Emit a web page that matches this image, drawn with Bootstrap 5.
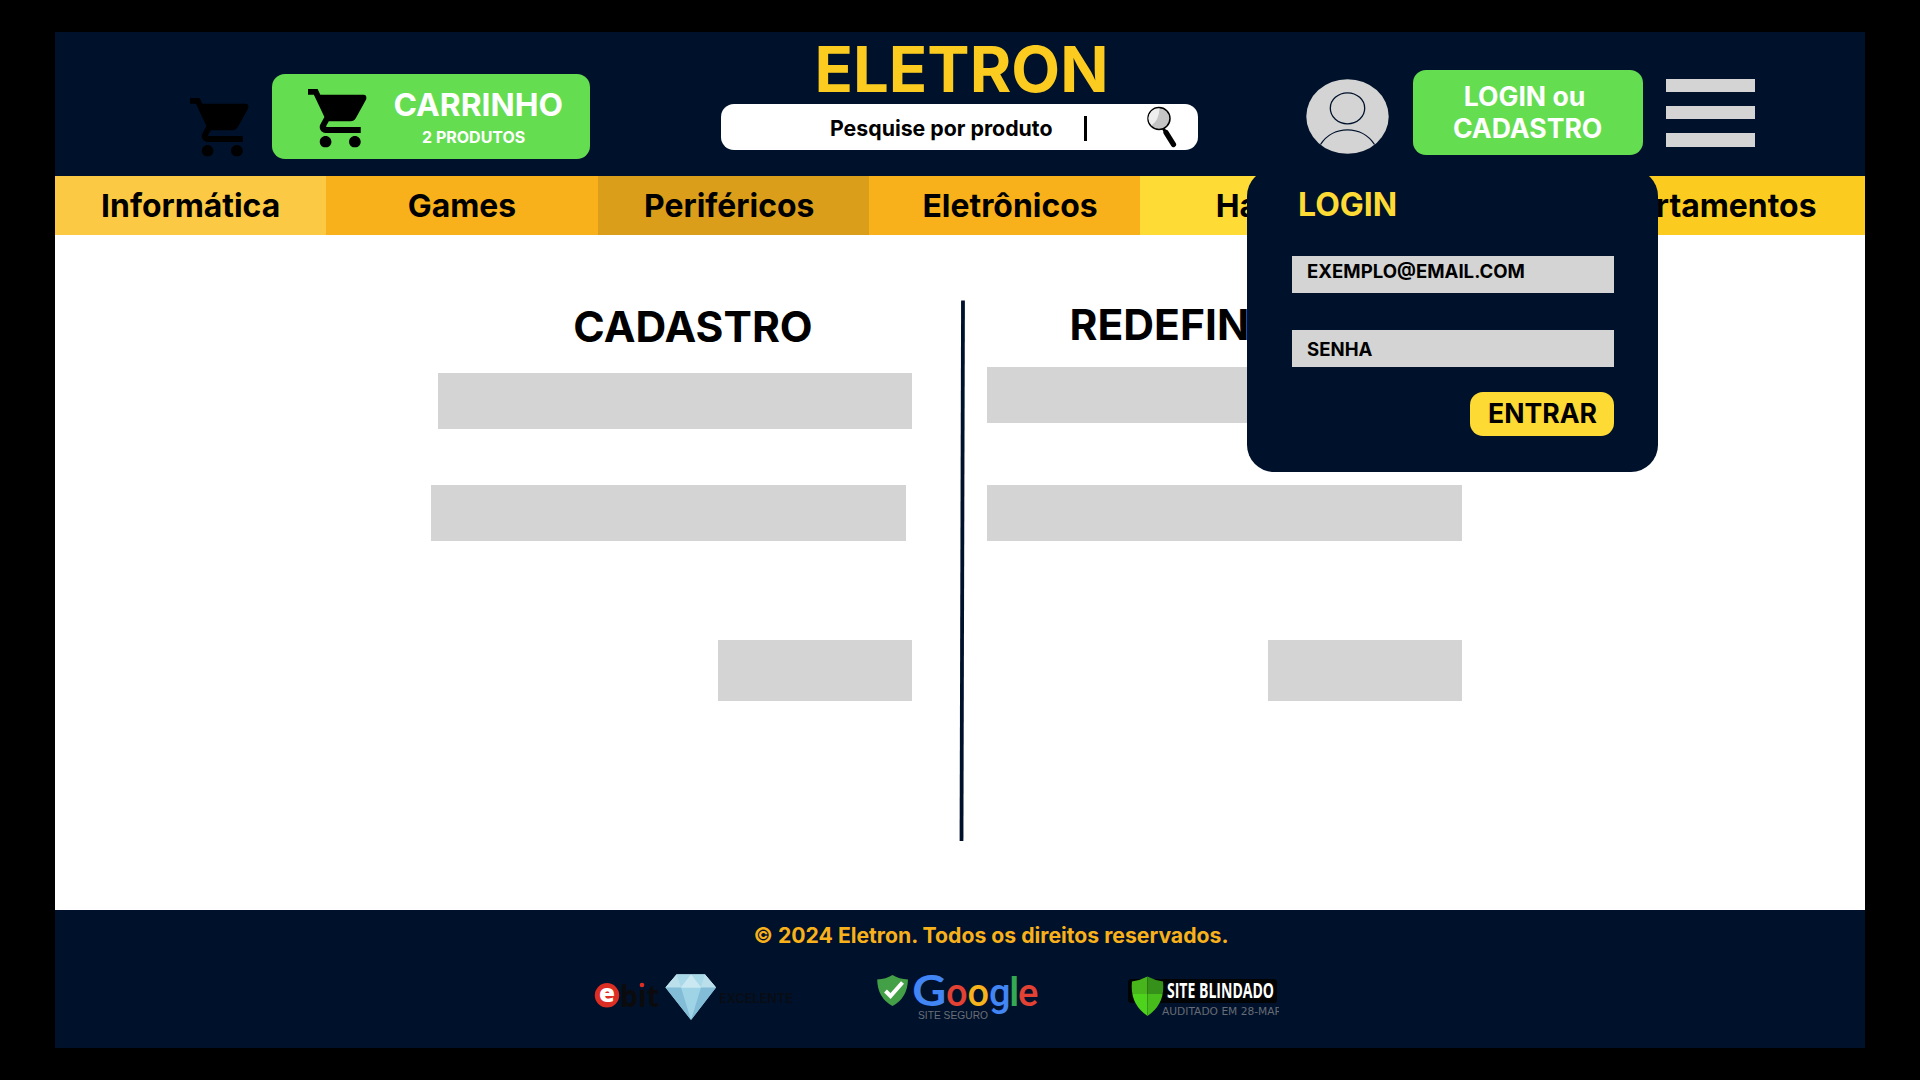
<!DOCTYPE html>
<html lang="pt-BR">
<head>
<meta charset="utf-8">
<meta name="viewport" content="width=device-width, initial-scale=1">
<title>Eletron</title>
<link href="https://cdn.jsdelivr.net/npm/bootstrap@5.3.0/dist/css/bootstrap.min.css" rel="stylesheet">
<style>
  :root { --navy:#00122b; --green:#64dd51; --yellow:#feda35; --grey:#d4d4d4; }
  body { background:#000; font-family:Inter,"Liberation Sans",sans-serif; font-weight:700; color:#000; line-height:1; overflow:hidden; }
  .page { width:1809.5px; height:1016px; margin:32px 0 0 55px; white-space:nowrap; }
  .topo { height:144px; background:var(--navy); padding-left:135px; }
  .ico-cart { width:58.6px; height:58.6px; display:block; }
  .cart-solo { margin-top:66px; }
  .btn-eletron { background:var(--green); color:#fff; border-radius:13px; font-weight:700; border:0; line-height:1; }
  .btn-cart { width:318px; height:85px; margin:42px 0 0 23.4px; padding:15px 27px 0 36px; }
  .cart-label { font-size:31.8px; margin-bottom:8.5px; }
  .cart-count { font-size:16px; padding-right:9px; }
  .brand-col { width:477px; margin:6.3px 0 0 131px; }
  .brand-name { font-size:63.4px; height:66px; color:#fccb20; padding-left:4px; }
  .busca { height:45.5px; background:#fff; border-radius:13px; padding-left:109px; }
  .busca-txt { font-size:21.3px; width:254px; padding-top:4px; }
  .caret { width:2.6px; height:25px; background:#000; margin-top:3px; }
  .lupa { width:32px; height:42px; margin:0 0 0 60.7px; }
  .avatar { width:83px; height:75px; margin:47px 0 0 108.5px; display:block; }
  .btn-login { width:230px; height:85px; margin:38px 0 0 23.5px; padding:0 7px 1px 0; font-size:26.6px; line-height:32px; }
  .menu-icon { width:89px; margin:47px 0 0 23px; display:flex; flex-direction:column; gap:13.7px; }
  .menu-icon span { height:13.4px; background:var(--grey); }
  .depts { height:58.5px; font-size:31.9px; }
  .depts a { flex:0 0 271.3px; color:#000; text-decoration:none; padding-top:2px; }
  .c1 { background:#fcc945; } .c2 { background:#f8b11b; } .c3 { background:#da9e1a; } .c5 { background:#fedb35; }
  .depts a.c3 { padding-right:8px; }
  .depts a.c4 { padding-left:11px; }
  .depts a.c5 { padding-left:31px; }
  .depts a.c6 { background:#fccb20; flex:1 1 0; padding-right:48px; }
  .conteudo { height:675.5px; background:#fff; padding:65.5px 0 0 376px; }
  .col-form { width:481px; padding-top:6px; }
  .col-right { margin-left:22px; width:475px; padding-top:3.5px; }
  .form-title { font-size:42.6px; line-height:1; font-weight:700; margin:0; }
  .title-left { height:67px; padding-left:43px; }
  .title-right { height:63.5px; padding-left:82.5px; }
  .campo { width:474.5px; height:55.7px; background:var(--grey); }
  .gap-left { margin-top:56.3px; } .gap-right { margin-top:62.3px; } .gap-acao { margin-top:99.3px; }
  .acao { width:194px; height:61px; background:var(--grey); }
  .divisor { width:6px; height:542px; margin-left:47px; display:block; }
  .rodape { height:138px; background:var(--navy); color:#f8b11b; }
  .copy { font-size:21.2px; padding:15px 0 0 698.5px; height:61px; }
  .selos { padding-left:538px; }
  .selos svg { display:block; }
  .login-box { position:absolute; left:1247px; top:169px; width:411px; height:302.7px; background:var(--navy); border-radius:27px; padding:19.5px 44px 0 45px; z-index:5; white-space:nowrap; }
  .login-title { font-size:32px; color:var(--yellow); line-height:1; font-weight:700; margin:0; padding-left:6px; height:67px; }
  .login-field { height:37.5px; width:322px; background:var(--grey); padding:6.4px 0 0 15px; font-size:18.6px; }
  .field-senha { margin-top:36.5px; padding-top:10.4px; }
  .entrar-row { margin-top:25px; }
  .btn-entrar { width:144px; height:44px; background:var(--yellow); border:0; border-radius:13px; font-weight:700; font-size:26.6px; line-height:1; padding:0 0 2px 1px; }
</style>
<script src="https://cdn.jsdelivr.net/npm/bootstrap@5.3.0/dist/js/bootstrap.bundle.min.js"></script>
</head>
<body>
<svg width="0" height="0" class="position-absolute">
  <symbol id="cart" viewBox="1 2 20 20"><path d="M7 18c-1.1 0-1.99.9-1.99 2S5.9 22 7 22s2-.9 2-2-.9-2-2-2zM1 2v2h2l3.6 7.59-1.35 2.45c-.16.28-.25.61-.25.96 0 1.1.9 2 2 2h12v-2H7.42c-.14 0-.25-.11-.25-.25l.03-.12.9-1.63h7.45c.75 0 1.41-.41 1.75-1.03l3.58-6.49c.08-.14.12-.31.12-.48 0-.55-.45-1-1-1H5.21l-.94-2H1zm16 16c-1.1 0-1.99.9-1.99 2s.89 2 1.99 2 2-.9 2-2-.9-2-2-2z"/></symbol>
</svg>
<div class="page d-flex flex-column">
  <header class="topo d-flex align-items-start">
    <svg class="ico-cart cart-solo flex-shrink-0"><use href="#cart"/></svg>
    <button class="btn btn-eletron btn-cart d-flex justify-content-between align-items-start flex-shrink-0">
      <svg class="ico-cart"><use href="#cart"/></svg>
      <span class="d-flex flex-column align-items-center">
        <span class="cart-label">CARRINHO</span>
        <span class="cart-count">2 PRODUTOS</span>
      </span>
    </button>
    <div class="brand-col flex-shrink-0">
      <div class="brand-name text-center">ELETRON</div>
      <div class="busca d-flex align-items-center">
        <span class="busca-txt">Pesquise por produto</span>
        <span class="caret"></span>
        <svg class="lupa" viewBox="0 0 32 42">
          <path d="M16 22L26.500 39" stroke="#000" stroke-width="3"/><path d="M19 26.500L26.500 38.500" stroke="#000" stroke-width="5.200" stroke-linecap="round"/>
          <circle cx="12" cy="12.500" r="11" fill="#c4c4c4" stroke="#000" stroke-width="1.500"/>
          <path d="M12.500 2.500A10 10 0 0 0 4.500 19.500Q12 14 12.500 2.500z" fill="#eee"/>
        </svg>
      </div>
    </div>
    <svg class="avatar flex-shrink-0" viewBox="0 0 83 75">
      <ellipse cx="41.500" cy="37.500" rx="41.200" ry="37.300" fill="#d4d4d4"/>
      <ellipse cx="41.500" cy="29.300" rx="17.200" ry="15.500" fill="none" stroke="#00122b" stroke-width="1.300"/>
      <path d="M14.500 65.500C27 46 56 46 68.500 65.500" fill="none" stroke="#00122b" stroke-width="1.300"/>
    </svg>
    <button class="btn btn-eletron btn-login flex-shrink-0 d-flex align-items-center justify-content-center"><span>LOGIN ou<br>&nbsp;CADASTRO</span></button>
    <div class="menu-icon flex-shrink-0"><span></span><span></span><span></span></div>
  </header>
  <nav class="depts d-flex">
    <a href="#" class="c1 d-flex align-items-center justify-content-center">Informática</a>
    <a href="#" class="c2 d-flex align-items-center justify-content-center">Games</a>
    <a href="#" class="c3 d-flex align-items-center justify-content-center">Periféricos</a>
    <a href="#" class="c2 c4 d-flex align-items-center justify-content-center">Eletrônicos</a>
    <a href="#" class="c5 d-flex align-items-center justify-content-center">Hardware</a>
    <a href="#" class="c6 d-flex align-items-center justify-content-end">Departamentos</a>
  </nav>
  <main class="conteudo d-flex align-items-start">
    <section class="col-form d-flex flex-column">
      <h2 class="form-title title-left text-center">CADASTRO</h2>
      <div class="campo align-self-end"></div>
      <div class="campo gap-left"></div>
      <div class="acao gap-acao align-self-end"></div>
    </section>
    <svg class="divisor flex-shrink-0" viewBox="0 0 6 542"><path d="M4 .5L2.500 541" stroke="#00122b" stroke-width="3.800"/></svg>
    <section class="col-right d-flex flex-column">
      <h2 class="form-title title-right">REDEFINIR</h2>
      <div class="campo"></div>
      <div class="campo gap-right"></div>
      <div class="acao gap-acao align-self-end"></div>
    </section>
  </main>
  <footer class="rodape">
    <div class="copy">© 2024 Eletron. Todos os direitos reservados.</div>
    <div class="selos d-flex">
      <!-- ebit -->
      <svg width="282" height="52" viewBox="593 971 282 52">
        <circle cx="607" cy="995.300" r="12.200" fill="#dc2e22"/>
        <text x="599" y="1002" font-family="Open Sans" font-weight="800" font-size="25" textLength="16" lengthAdjust="spacingAndGlyphs" fill="#fff">e</text>
        <text x="620" y="1007" font-family="Open Sans" font-weight="700" font-size="31" textLength="39" lengthAdjust="spacingAndGlyphs" fill="#0b0b0e">bıt</text>
        <circle cx="642" cy="985" r="2.300" fill="#dc2e22"/>
        <path d="M676.500 974.500H705L716 987.500 691 1020 665.500 987.500z" fill="#9fd4e6"/>
        <path d="M676.500 974.500H705L716 987.500H665.500z" fill="#c6e5ef"/>
        <path d="M676.500 974.500L681 987.500H665.500zM705 974.500L716 987.500H701z" fill="#bce0eb"/>
        <path d="M676.500 974.500H691L681 987.500zM691 974.500H705L701 987.500z" fill="#a9d9e8"/>
        <path d="M691 974.500L701 987.500H681z" fill="#c9e8f1"/>
        <path d="M665.500 987.500H681L691 1020zM701 987.500H716L691 1020z" fill="#82bcd7"/>
        <text x="719" y="1002.700" font-family="Inter" font-weight="600" font-size="13.500" textLength="74" lengthAdjust="spacingAndGlyphs" fill="#080c14">EXCELENTE</text>
      </svg>
      <!-- Google site seguro -->
      <svg width="251" height="52" viewBox="875 971 251 52">
        <path d="M892.500 975Q899 979 908 979.500Q907.500 998 892.500 1006Q877.500 998 877.200 979.500Q886 979 892.500 975z" fill="#43a047"/>
        <path d="M885.500 991L890.500 996L902.500 982.500" fill="none" stroke="#fff" stroke-width="4"/>
        <text x="912.200" y="1005.500" font-family="Lato" font-size="42.500" font-weight="700" textLength="34" lengthAdjust="spacingAndGlyphs" fill="#4285f4">G</text>
        <text y="1005.500" font-family="Roboto" font-weight="500" font-size="38"><tspan x="946" fill="#e34133">o</tspan><tspan x="967.500" fill="#f6b31c">o</tspan><tspan x="989" fill="#4285f4">g</tspan><tspan x="1009" font-size="41" fill="#34a853">l</tspan><tspan x="1018" fill="#e34133">e</tspan></text>
        <text x="918" y="1018.800" font-family="Liberation Sans" font-weight="400" font-size="10.800" textLength="70" lengthAdjust="spacingAndGlyphs" fill="#6a6f78">SITE SEGURO</text>
      </svg>
      <!-- Site Blindado -->
      <svg width="153" height="52" viewBox="1126 971 153 52">
        <rect x="1128" y="979" width="149" height="24" rx="3.500" fill="#020305"/>
        <clipPath id="shieldShape"><path d="M1147.500 976.500Q1154 980 1163 981.500Q1165.500 1004 1147.500 1016Q1129.500 1004 1132 981.500Q1141 980 1147.500 976.500z"/></clipPath>
        <g clip-path="url(#shieldShape)">
          <path fill="#49b51d" d="M1126 971h21.500v23h-21.500z"/><path fill="#35911a" d="M1147.500 971h21.500v23h-21.500z"/>
          <path fill="#4dd31b" d="M1126 994h21.500v26h-21.500z"/><path fill="#47bd1c" d="M1147.500 994h21.500v26h-21.500z"/>
        </g>
        <text x="1167" y="998.300" font-family="Open Sans" font-weight="700" font-size="21" textLength="107" lengthAdjust="spacingAndGlyphs" fill="#fff">SITE BLINDADO</text>
        <text x="1162" y="1015" font-family="DejaVu Sans" font-weight="400" font-size="11" textLength="120" lengthAdjust="spacingAndGlyphs" fill="#666b75">AUDITADO EM 28-MAR</text>
      </svg>
    </div>
  </footer>
</div>
<aside class="login-box">
  <h3 class="login-title">LOGIN</h3>
  <div class="login-field">EXEMPLO@EMAIL.COM</div>
  <div class="login-field field-senha">SENHA</div>
  <div class="entrar-row d-flex justify-content-end"><button class="btn-entrar">ENTRAR</button></div>
</aside>
</body>
</html>
